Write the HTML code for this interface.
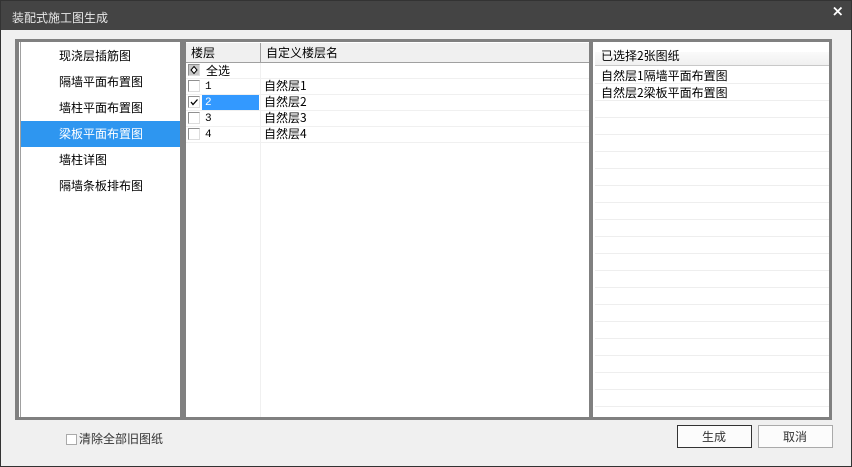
<!DOCTYPE html>
<html><head><meta charset="utf-8">
<style>
html,body{margin:0;padding:0;width:852px;height:467px;overflow:hidden;background:#f0f0f0}
div{position:absolute;box-sizing:border-box}
.t{font:12px/14px "WenQuanYi Zen Hei","Noto Sans CJK SC",sans-serif;color:#000;white-space:nowrap}
.n{font:11px/14px "Liberation Mono",monospace;color:#000}
.h{left:186px;width:403px;height:1px;background:#f0f0f0}
.r{left:595px;width:234px;height:1px;background:#eeeeee}
.c{left:188px;width:12px;height:12px;background:#fff;border:1px solid #909090;border-right-color:#ddd;border-bottom-color:#ddd}
</style></head><body>
<div style="left:0;top:0;width:852px;height:467px;border:1px solid #333;border-top-color:#333"></div>
<div style="left:0;top:0;width:852px;height:30px;background:#444;border:1px solid #333;border-bottom:0"></div>
<div class="t" style="left:12px;top:11px;color:#e8e8e8">装配式施工图生成</div>
<svg style="position:absolute;left:833px;top:6px" width="10" height="10"><path d="M1 1.5L8.5 9M8.5 1.5L1 9" stroke="#fff" stroke-width="1.8"/></svg>

<div style="left:15px;top:39px;width:817px;height:381px;background:#808080"></div>
<div style="left:19px;top:42px;width:161px;height:375px;background:#fff"></div>
<div style="left:20px;top:42px;width:1px;height:375px;background:#a0a0a0"></div>
<div style="left:186px;top:42px;width:403px;height:375px;background:#fff"></div>
<div style="left:593px;top:42px;width:236px;height:375px;background:#fff"></div>

<div style="left:21px;top:121px;width:159px;height:26px;background:#2e96f0"></div>
<div class="t" style="left:59px;top:49px">现浇层插筋图</div>
<div class="t" style="left:59px;top:75px">隔墙平面布置图</div>
<div class="t" style="left:59px;top:101px">墙柱平面布置图</div>
<div class="t" style="left:59px;top:127px;color:#fff">梁板平面布置图</div>
<div class="t" style="left:59px;top:153px">墙柱详图</div>
<div class="t" style="left:59px;top:179px">隔墙条板排布图</div>

<div style="left:186px;top:43px;width:403px;height:19px;background:#f0f0f0"></div>
<div style="left:186px;top:62px;width:403px;height:1px;background:#a0a0a0"></div>
<div style="left:260px;top:43px;width:1px;height:19px;background:#a0a0a0"></div>
<div style="left:260px;top:63px;width:1px;height:354px;background:#f0f0f0"></div>
<div class="t" style="left:191px;top:46px">楼层</div>
<div class="t" style="left:266px;top:46px">自定义楼层名</div>
<div class="h" style="top:78px"></div>
<div class="h" style="top:94px"></div>
<div class="h" style="top:110px"></div>
<div class="h" style="top:126px"></div>
<div class="h" style="top:142px"></div>

<div class="c" style="top:64px;background:#c8c8c8"></div>
<svg style="position:absolute;left:188px;top:64px" width="12" height="12"><path d="M6 2.5L9 6L6 9.5L3 6Z" fill="#fff" stroke="#000" stroke-width="1"/></svg>
<div class="t" style="left:206px;top:64px">全选</div>

<div class="c" style="top:80px"></div>
<div class="c" style="top:96px"></div>
<svg style="position:absolute;left:188px;top:96px" width="12" height="12"><path d="M3 6L5 8.5L9.5 3.5" fill="none" stroke="#000" stroke-width="1.3"/></svg>
<div class="c" style="top:112px"></div>
<div class="c" style="top:128px"></div>
<div style="left:202px;top:95px;width:57px;height:15px;background:#3399ff"></div>
<div class="n" style="left:205px;top:80px">1</div>
<div class="n" style="left:205px;top:96px;color:#fff">2</div>
<div class="n" style="left:205px;top:112px">3</div>
<div class="n" style="left:205px;top:128px">4</div>
<div class="t" style="left:264px;top:79px">自然层1</div>
<div class="t" style="left:264px;top:95px">自然层2</div>
<div class="t" style="left:264px;top:111px">自然层3</div>
<div class="t" style="left:264px;top:127px">自然层4</div>

<div style="left:595px;top:52px;width:234px;height:13px;background:linear-gradient(#fafafa,#f0f0f0)"></div>
<div style="left:595px;top:65px;width:234px;height:1px;background:#c8c8c8"></div>
<div class="t" style="left:601px;top:49px">已选择2张图纸</div>
<div class="t" style="left:601px;top:69px">自然层1隔墙平面布置图</div>
<div class="t" style="left:601px;top:86px">自然层2梁板平面布置图</div>
<div class="r" style="top:83px"></div>
<div class="r" style="top:100px"></div>
<div class="r" style="top:117px"></div>
<div class="r" style="top:134px"></div>
<div class="r" style="top:151px"></div>
<div class="r" style="top:168px"></div>
<div class="r" style="top:185px"></div>
<div class="r" style="top:202px"></div>
<div class="r" style="top:219px"></div>
<div class="r" style="top:236px"></div>
<div class="r" style="top:253px"></div>
<div class="r" style="top:270px"></div>
<div class="r" style="top:287px"></div>
<div class="r" style="top:304px"></div>
<div class="r" style="top:321px"></div>
<div class="r" style="top:338px"></div>
<div class="r" style="top:355px"></div>
<div class="r" style="top:372px"></div>
<div class="r" style="top:389px"></div>
<div class="r" style="top:406px"></div>

<div style="left:66px;top:434px;width:11px;height:11px;background:#fff;border:1px solid #aaa"></div>
<div class="t" style="left:79px;top:432px;color:#333">清除全部旧图纸</div>

<div style="left:677px;top:425px;width:75px;height:23px;background:#fcfcfc;border:1px solid #333"></div>
<div class="t" style="left:702px;top:430px;color:#333">生成</div>
<div style="left:758px;top:425px;width:75px;height:23px;background:#fcfcfc;border:1px solid #aaa"></div>
<div class="t" style="left:783px;top:430px;color:#333">取消</div>
</body></html>
